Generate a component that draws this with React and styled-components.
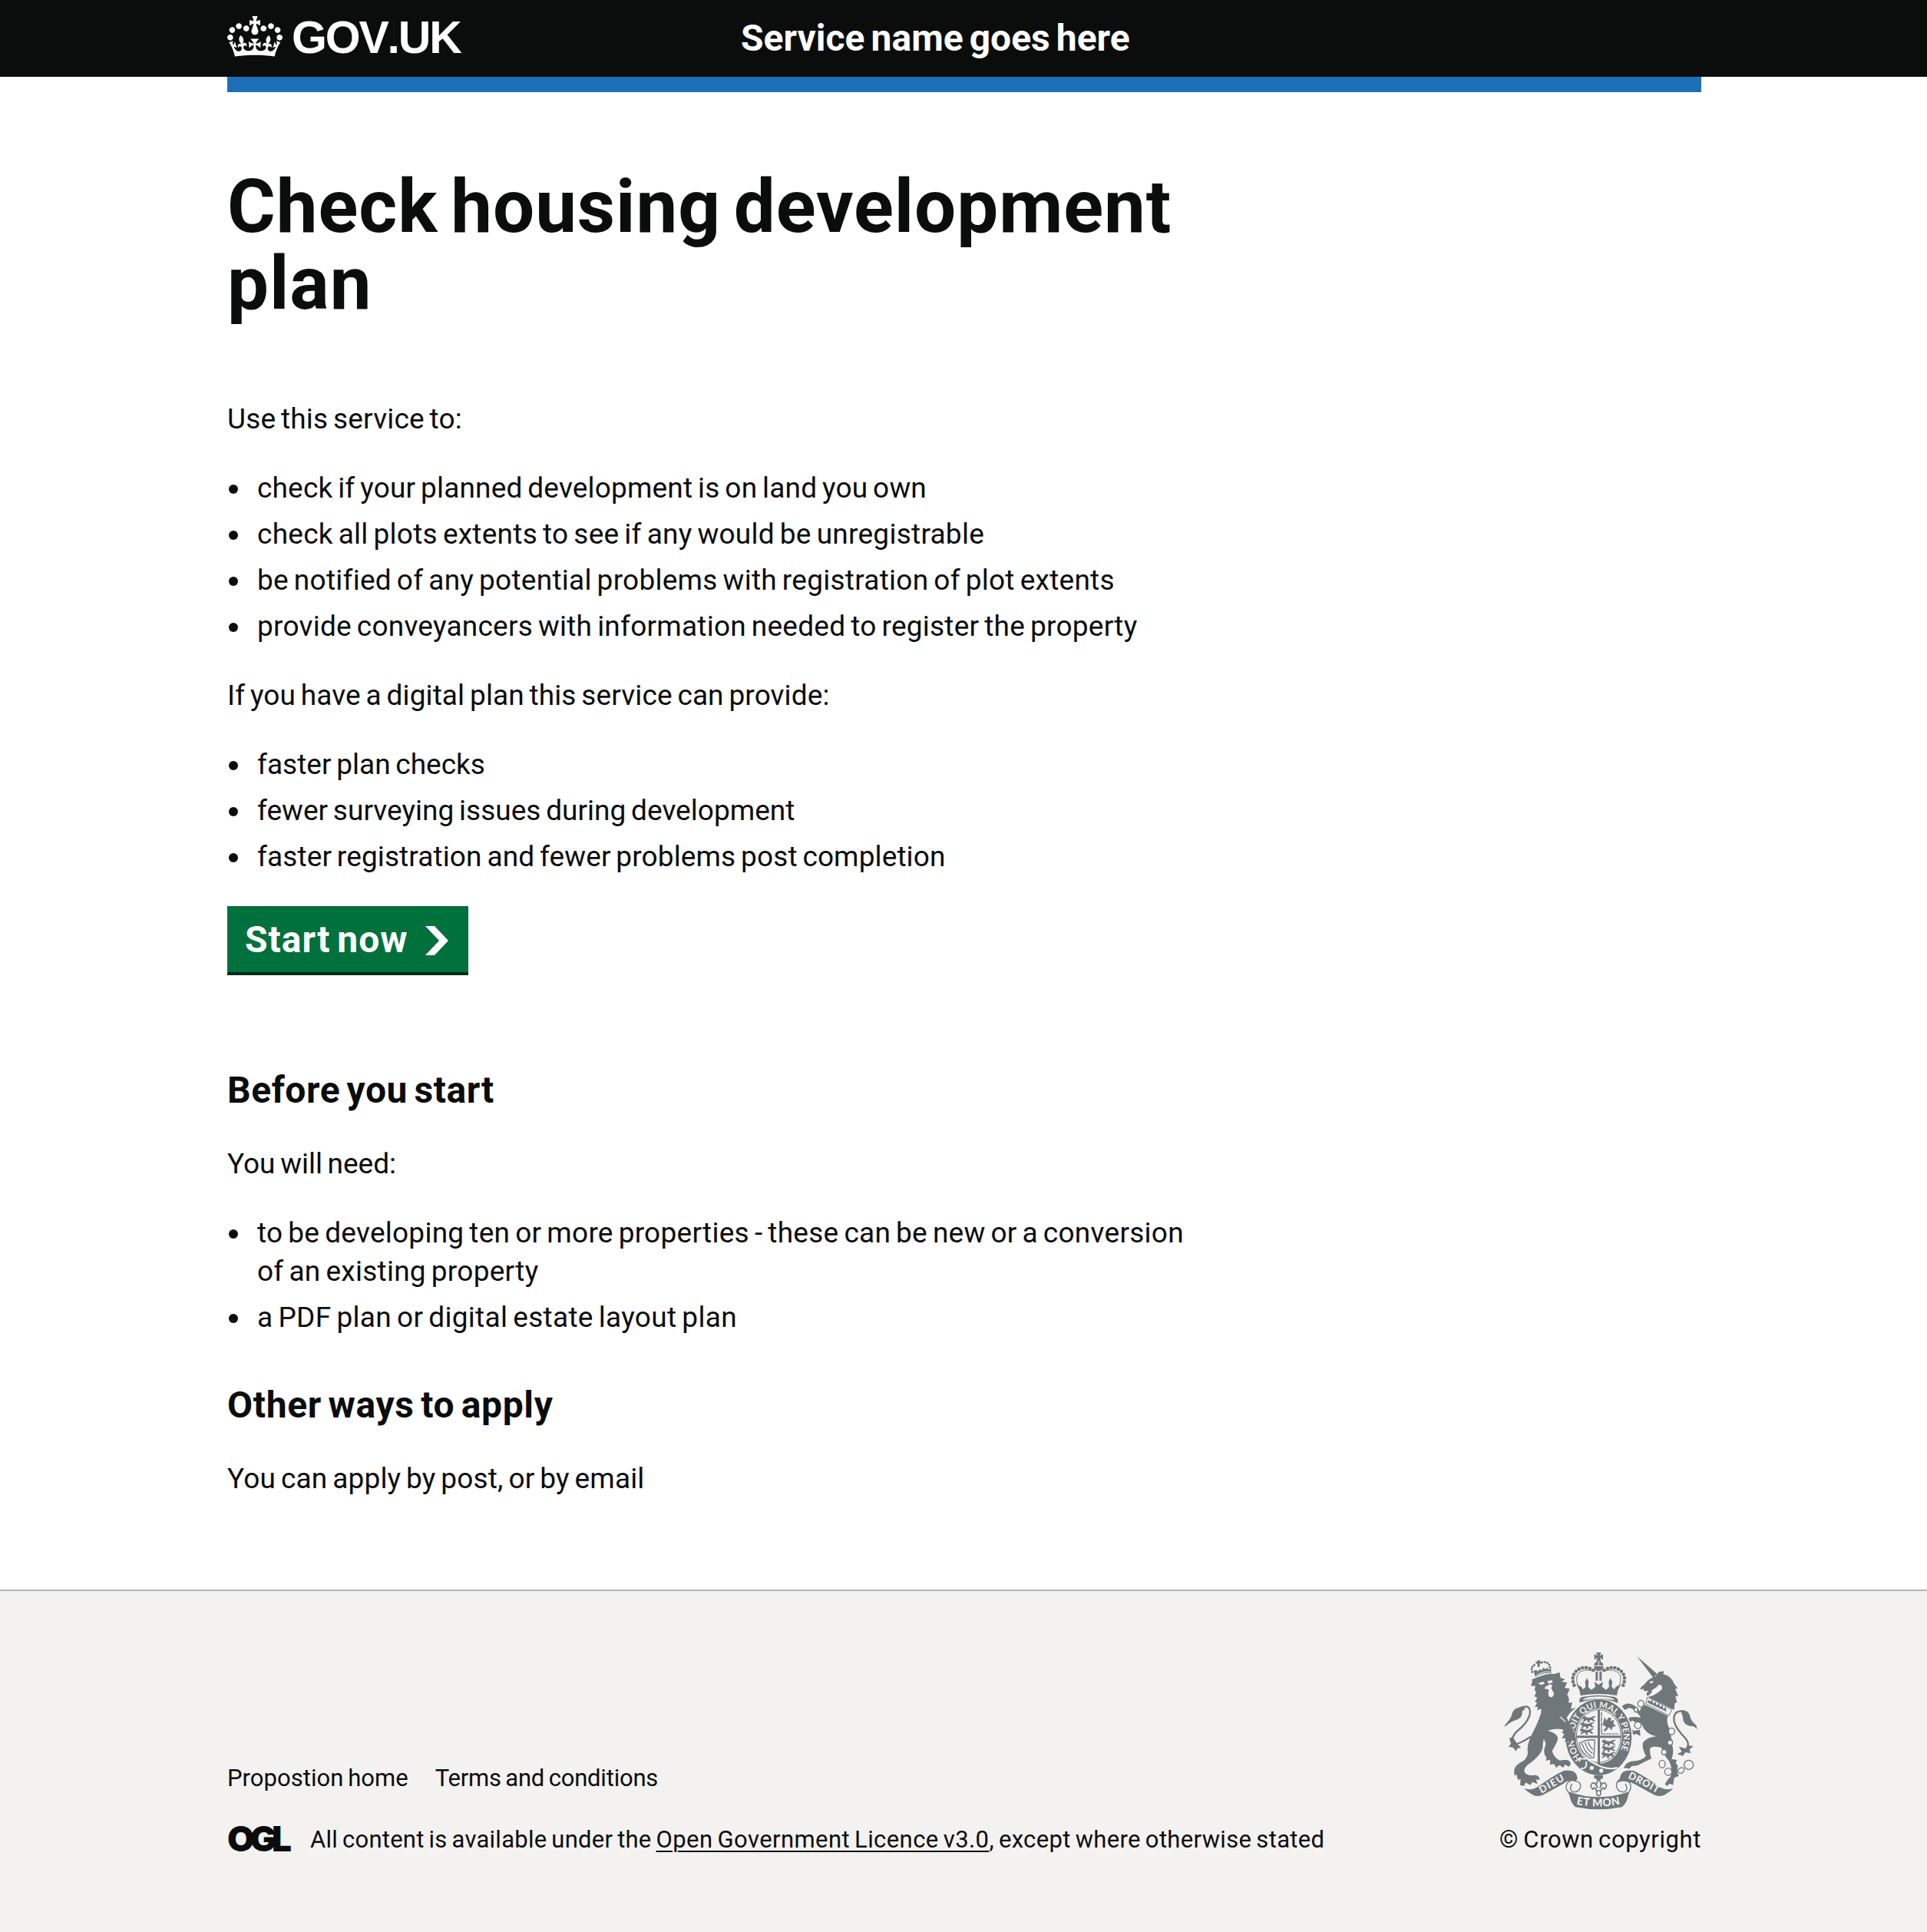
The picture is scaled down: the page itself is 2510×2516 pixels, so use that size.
import React from "react";
import styled, { createGlobalStyle } from "styled-components";

const ink = "#0b0c0c";
const crestGrey = "#6f777b";
const footerGrey = "#f3f2f1";

const GlobalStyle = createGlobalStyle`
  *, *::before, *::after { box-sizing: border-box; }
  body { margin: 0; background: #fff; color: ${ink}; font-family: Roboto, "Liberation Sans", sans-serif; }
`;

const Page = styled.div`
  min-height: 2516px;
  display: flex;
  flex-direction: column;
`;

const Container = styled.div`
  width: 1920px;
  margin: 0 294px 0 296px;
`;

const Header = styled.header`
  background: ${ink};
  color: #fff;
  height: 100px;
`;

const HeaderRow = styled.div`
  padding-left: 296px;
  height: 100px;
  display: flex;
  align-items: flex-start;
`;

const LogoLink = styled.a`
  width: 669px;
  display: flex;
  align-items: flex-start;
  color: #fff;
  text-decoration: none;
`;

const Crown = styled.svg`
  width: 72px;
  height: 53px;
  margin: 21px 12px 0 0;
  fill: currentColor;
`;

const LogoText = styled.span`
  font: 700 59px/60px "Liberation Sans", Arial, sans-serif;
  font-kerning: none;
  letter-spacing: -2.2px;
  margin-top: 19px;
`;

const ServiceName = styled.a`
  color: #fff;
  text-decoration: none;
  font-size: 48px;
  font-weight: 700;
  line-height: 60px;
  padding-top: 20px;
  letter-spacing: ${(p) => p.$track}px;
  word-spacing: -4px;
`;

const BlueBar = styled(Container)`
  height: 20px;
  background: #1d70b8;
`;

const Main = styled.main`
  width: 1920px;
  margin: 0 294px 0 296px;
  padding-top: 99px;
  height: 1950px;
`;

const Column = styled.div`
  width: 1252px;
`;

const Title = styled.h1`
  margin: 0 0 102px;
  font-size: 96px;
  line-height: 100px;
  font-weight: 700;
  letter-spacing: ${(p) => p.$track}px;
  word-spacing: -8px;
`;

const Paragraph = styled.p`
  margin: 0 0 40px;
  font-size: 37px;
  line-height: 50px;
  letter-spacing: ${(p) => p.$track}px;
  word-spacing: -2.5px;
`;

const List = styled.ul`
  margin: 0 0 40px;
  padding: 0;
  list-style: none;
  display: flex;
  flex-direction: column;
  gap: 10px;
`;

const Item = styled.li`
  display: flex;
  font-size: 37px;
  line-height: 50px;
  letter-spacing: ${(p) => p.$track}px;
  word-spacing: -2.5px;
  &::before {
    content: "";
    flex: none;
    width: 12px;
    height: 12px;
    border-radius: 50%;
    background: ${ink};
    margin: 20px 25px 0 2px;
  }
`;

const Heading = styled.h2`
  margin: 0 0 41px;
  padding-top: ${(p) => p.$space}px;
  font-size: 48px;
  line-height: 60px;
  font-weight: 700;
  letter-spacing: ${(p) => p.$track}px;
  word-spacing: -4px;
`;

const StartButton = styled.a`
  display: flex;
  width: 314px;
  height: 90px;
  margin-top: -41px;
  padding: 14px 26px 0 23px;
  justify-content: space-between;
  background: #00703c;
  border-bottom: 4px solid #002d18;
  color: #fff;
  text-decoration: none;
  font-size: 48px;
  line-height: 60px;
  font-weight: 700;
  letter-spacing: ${(p) => p.$track}px;
  word-spacing: -4px;
`;

const Benefits = styled(List)`
  margin-bottom: 80px;
`;

const Arrow = styled.svg`
  width: 30px;
  height: 38px;
  margin-top: 12px;
  fill: currentColor;
`;

const Footer = styled.footer`
  flex: 1;
  background: ${footerGrey};
  border-top: 2px solid #b1b4b6;
`;

const FooterRow = styled(Container)`
  height: 344px;
  display: flex;
  justify-content: space-between;
  align-items: flex-end;
`;

const FooterMeta = styled.div`
  display: flex;
  flex-direction: column;
  gap: 40px;
`;

const FooterLinks = styled.div`
  display: flex;
  gap: 35px;
`;

const FooterText = styled.a`
  color: ${ink};
  font-size: 31px;
  line-height: 40px;
  white-space: nowrap;
  text-decoration: none;
  letter-spacing: ${(p) => p.$track}px;
  word-spacing: -2px;
`;

const LicenceLine = styled.div`
  display: flex;
  height: 40px;
`;

const OglMark = styled.span`
  width: 108px;
  font: 900 46px/37px Inter, sans-serif;
  letter-spacing: -6.2px;
`;

const LicenceLink = styled(FooterText)`
  text-decoration: underline;
  text-decoration-thickness: 2px;
  text-underline-offset: 4px;
`;

const Copyright = styled.div`
  display: flex;
  flex-direction: column;
  align-items: flex-end;
  gap: 20px;
`;

const Crest = styled.svg`
  width: 250px;
  height: 204px;
  margin-right: 6px;
  overflow: visible;
`;

function CrownIcon() {
  return (
    <Crown viewBox="0 0 132 97" preserveAspectRatio="none" aria-hidden="true">
      <path d="M25 30.2c3.5 1.5 7.7-.2 9.1-3.7 1.5-3.6-.2-7.8-3.9-9.2-3.6-1.4-7.6.3-9.1 3.9-1.4 3.5.3 7.5 3.9 9zM9 39.5c3.6 1.5 7.8-.2 9.2-3.7 1.5-3.6-.2-7.8-3.9-9.1-3.6-1.5-7.6.2-9.1 3.8-1.4 3.5.3 7.5 3.8 9zM4.4 57.2c3.5 1.5 7.7-.2 9.1-3.8 1.5-3.6-.2-7.7-3.9-9.1-3.5-1.5-7.6.3-9.1 3.8-1.4 3.5.3 7.6 3.9 9.1zm38.3-21.4c3.5 1.5 7.7-.2 9.1-3.8 1.5-3.6-.2-7.7-3.9-9.1-3.6-1.5-7.6.3-9.1 3.8-1.3 3.6.4 7.7 3.9 9.1zm64.4-5.6c-3.6 1.5-7.8-.2-9.1-3.7-1.5-3.6.2-7.8 3.8-9.2 3.6-1.4 7.7.3 9.2 3.9 1.3 3.5-.4 7.5-3.9 9zm15.9 9.3c-3.6 1.5-7.7-.2-9.1-3.7-1.5-3.6.2-7.8 3.7-9.1 3.6-1.5 7.7.2 9.2 3.8 1.5 3.5-.3 7.5-3.8 9zm4.7 17.7c-3.6 1.5-7.8-.2-9.2-3.8-1.5-3.6.2-7.7 3.9-9.1 3.6-1.5 7.7.3 9.2 3.8 1.3 3.5-.4 7.6-3.9 9.1zM89.3 35.8c-3.6 1.5-7.8-.2-9.2-3.8-1.4-3.6.2-7.7 3.9-9.1 3.6-1.5 7.7.3 9.2 3.8 1.4 3.6-.3 7.7-3.9 9.1zM69.7 17.7l8.9 4.7V9.3l-8.9 2.8c-.2-.3-.5-.6-.9-.9L72.4 0H59.6l3.5 11.2c-.3.3-.6.5-.9.9l-8.8-2.8v13.1l8.8-4.7c.3.3.6.7.9.9l-5 15.4v.1c-.2.8-.4 1.6-.4 2.4 0 4.1 3.1 7.5 7 8.1h.2c.3 0 .7.1 1 .1.4 0 .7 0 1-.1h.2c4-.6 7.1-4.1 7.1-8.1 0-.8-.1-1.7-.4-2.4V34l-5.1-15.4c.4-.2.7-.6 1-.9zM66 92.8c16.9 0 32.8 1.1 47.1 3.2 4-16.9 8.9-26.7 14-33.5l-9.6-3.4c1 4.9 1.1 7.2 0 10.2-1.5-1.4-3-4.3-4.2-8.7L108.6 76c2.8-2 5-3.2 7.5-3.3-4.4 9.4-10 11.9-13.6 11.2-4.3-.8-6.3-4.6-5.6-7.9 1-4.7 5.7-5.9 8-.5 4.3-8.7-3-11.4-7.6-8.8 7.1-7.2 7.9-13.5 2.1-21.1-8 6.1-8.1 12.3-4.5 20.8-4.7-5.4-12.1-2.5-9.5 6.2 3.4-5.2 7.9-2 7.2 3.1-.6 4.3-6.4 7.8-13.5 7.2-10.3-.9-10.9-8-11.2-13.8 2.5-.5 7.1 1.8 11 7.3L80.2 60c-4.1 4.4-8 5.3-12.3 5.4 1.4-4.4 8-11.6 8-11.6H55.5s6.4 7.2 7.9 11.6c-4.2-.1-8-1-12.3-5.4l1.4 16.4c3.9-5.5 8.5-7.7 10.9-7.3-.3 5.8-.9 12.8-11.1 13.8-7.2.6-12.9-2.9-13.5-7.2-.7-5 3.8-8.3 7.1-3.1 2.7-8.7-4.6-11.6-9.4-6.2 3.7-8.5 3.6-14.7-4.6-20.8-5.8 7.6-5 13.9 2.2 21.1-4.7-2.6-11.9.1-7.7 8.8 2.3-5.5 7.1-4.2 8.1.5.7 3.3-1.3 7.1-5.7 7.9-3.5.7-9-1.8-13.5-11.2 2.5.1 4.7 1.3 7.5 3.3l-4.7-15.4c-1.2 4.4-2.7 7.2-4.3 8.7-1.1-3-.9-5.3 0-10.2l-9.5 3.4c5 6.9 9.9 16.7 14 33.5 14.8-2.1 30.8-3.2 47.7-3.2z" />
    </Crown>
  );
}

function SmallLion({ x, y }) {
  return (
    <path
      transform={`translate(${x} ${y})`}
      d="M4 3l8-3 5 5 16 2 12-5 10-2-2 5-8 3 4 8 8 4-12 1-4-5-10 1 2 7-10 1 2-6-8-2-6 6-9 1 7-8-2-5-6 1z"
      fill={crestGrey}
    />
  );
}

function RoyalCrest() {
  const bg = footerGrey;
  const line = { fill: "none", stroke: crestGrey, strokeLinecap: "round" };
  return (
    <Crest viewBox="60 66 750 612" fill={crestGrey} aria-hidden="true">
      {/* lion */}
      <path d="M168 178L162 196 181 197Q172 214 183 220L176 238 187 242 178 258 186 262 178 280 190 278 186 292 202 286Q205 300 195 322 185 350 165 388 145 430 150 455 150 480 128 492 104 504 97 522L97 546 106 544 112 564 122 560 120 584 135 588 142 574 160 584 168 572 188 580 182 562 196 564Q197 545 175 545 150 550 138 535 132 520 150 505 200 470 208 440 208 420 212 405 226 420 215 440 210 465 224 476L220 488 238 486 236 504 252 502 262 517 272 506 290 516 294 504 312 512 318 500Q316 486 298 485L275 488Q250 475 245 450 265 420 268 400 262 380 228 372 260 360 290 368L284 380 294 384 284 400 298 402 294 416 308 410 312 424 322 410 340 414Q336 385 318 350L302 322Q312 300 338 282L318 286 324 262 308 262Q316 246 304 232L314 208 294 204 304 184 282 180 296 170 278 165 274 143 255 150Q225 146 195 160L165 172Z" />
      <path d="M190 186l22-6 4 8-14 5zM226 178l18-4 4 8-16 6zM218 200l20-10 8 4-4 12 10 18q0 16-12 17-10-2-10-17l2-14-16-2z" fill={bg} />
      <path d="M276 318Q310 345 328 372" fill="none" stroke={bg} strokeWidth="4" />
      <path {...line} strokeWidth="7" d="M120 282Q166 264 157 312 145 345 110 372 85 392 92 422 100 434 160 396" />
      <path d="M142 284Q100 272 88 305 88 320 60 350L62 356Q82 336 104 330 132 320 128 296zM90 395L78 402 84 422 75 434 94 438 104 452 110 440 124 438 110 424z" />
      <path d="M172 138L180 161Q208 143 241 147L241 126Q230 140 226 124 218 138 212 124 204 142 196 130 190 146 184 134Z" />
      <path d="M188 96h10l-1 6 6-1v9l-6-1-1 14h-7l-2-14-6 1v-9l7 1z" />
      <path {...line} strokeWidth="9" strokeDasharray="0 10.5" d="M167 142Q160 118 182 112M206 104Q234 98 238 130" />
      <path d="M184 155Q208 138 238 142" fill="none" stroke={bg} strokeWidth="3" />

      {/* unicorn */}
      <path d="M576 80L656 150 640 164ZM650 158L662 142 684 139 678 150Q712 158 722 188L736 206 726 208 738 236 727 236 733 262 724 264 722 290 620 240Q648 234 674 210 678 190 662 192 652 206 636 212 634 230 616 236L614 224 622 216 604 217 602 208 590 212Q590 198 605 192 618 170 650 158Z" />
      <path d="M624 182l12-5 6 4-10 6z" fill={bg} />
      <path d="M618 240L713 289 702 313 611 266Z" fill={bg} stroke={crestGrey} strokeWidth="3" />
      <path d="M618 262l4-12 6 8 8-8 4 16 8-8 6 15 9-10 4 17 9-9 4 16 9-9 3 19z" />
      <path d="M608 270L698 314Q690 335 700 355 713 400 715 430 722 455 712 482L733 486 728 498 736 508 734 536 740 548 722 556 718 584 704 578 694 588 686 580Q697 560 708 552 717 520 702 490 680 465 672 438 640 428 628 440 625 462 634 480 600 496 578 508L556 510 548 520 524 517Q535 490 570 490 600 486 612 470 595 440 600 418 618 396 652 394 608 385 595 345 578 345 560 332 548 335 550 350L562 372 588 368 590 392 574 384 562 388Q538 360 534 330 545 316 570 318L592 320Q580 300 560 287L548 282 528 290 518 276Q535 260 555 268 575 275 588 296 590 280 608 270Z" />
      <path {...line} strokeWidth="7" d="M760 296Q716 290 722 335 728 362 765 400 786 426 770 442" />
      <path d="M748 292Q776 288 783 312 788 335 808 350L812 366Q798 350 784 354 756 346 756 320zM740 434L752 454 734 462 756 470 766 456 786 460 782 444 798 432 780 430 770 442z" />
      <g fill={bg} stroke={crestGrey} strokeWidth="4">
        <ellipse cx="592" cy="266" rx="12" ry="13" />
        <ellipse cx="573" cy="290" rx="7" ry="9" />
        <circle cx="580" cy="350" r="13" />
        <ellipse cx="712" cy="374" rx="12" ry="13" />
        <circle cx="706" cy="418" r="10" />
        <circle cx="683" cy="455" r="10" />
        <ellipse cx="675" cy="502" rx="12" ry="15" />
        <circle cx="699" cy="532" r="14" />
        <ellipse cx="749" cy="527" rx="13" ry="10" transform="rotate(-35 749 527)" />
        <circle cx="779" cy="505" r="18" />
      </g>

      {/* garter and shield */}
      <ellipse cx="427" cy="397" rx="134" ry="152" fill={bg} />
      <ellipse cx="427" cy="397" rx="129" ry="148" />
      <ellipse cx="427" cy="393" rx="91" ry="108" fill={bg} />
      <ellipse cx="427" cy="393" rx="87" ry="103" fill="none" stroke={crestGrey} strokeWidth="3" />
      <path d="M423 290h9v212h-9zM340 391h174v9H340z" />
      <path d="M438 300V384H504" fill="none" stroke={crestGrey} strokeWidth="5" strokeDasharray="5 2" />
      <path d="M450 318l8 14 7-12 12 2-4 12 14-4-2 14 10 10-13 2-4 14-11-12-9 12-12 6 4-12 8-4-10-10-6 2z" />
      <SmallLion x={360} y={314} />
      <SmallLion x={354} y={338} />
      <SmallLion x={352} y={362} />
      <SmallLion x={438} y={406} />
      <SmallLion x={438} y={430} />
      <SmallLion x={436} y={454} />
      <path {...line} strokeWidth="4" d="M352 420Q382 404 412 408L408 476Q392 484 380 470 352 446 352 420M362 422Q372 456 398 472M374 418Q382 446 402 460M386 416Q392 434 404 444" />
      <path id="garter" d="M360 480A97 115 0 1 1 492 482" fill="none" />
      <text fill={bg} fontFamily="Lato" fontWeight="700" fontSize="34">
        <textPath href="#garter" textLength="474">HONI SOIT QUI MAL Y PENSE</textPath>
      </text>
      <path d="M290 368L284 380 294 384 284 400 298 402 294 416 308 410 312 424 322 410 340 414Q336 385 318 350L302 322Z" />
      <path d="M352 492Q350 476 372 482 384 470 394 490 456 530 500 516" fill="none" stroke={bg} strokeWidth="6" />
      <path d="M358 520Q384 520 378 492" fill="none" stroke={bg} strokeWidth="6" />
      <circle cx="400" cy="517" r="8" fill={bg} />
      <circle cx="437" cy="528" r="8" fill={bg} />

      {/* crown */}
      <path d="M417 66h20l-6 13 13-7v22l-13-7 6 13h-20l6-13-13 7v-22l13 7z" />
      <circle cx="427" cy="119" r="19" />
      <path d="M408 118h38M427 100v18" stroke={bg} strokeWidth="3" />
      <path {...line} strokeWidth="14" strokeDasharray="0 14.6" d="M406 135Q366 112 336 142 318 164 332 196M448 135Q488 112 518 142 536 164 522 196" />
      <path {...line} strokeWidth="3" d="M410 140Q366 124 344 152 336 176 350 206M444 140Q488 124 510 152 518 176 504 206" />
      <path d="M415 140h9v36h-9zM430 140h9v36h-9z" />
      <path d="M340 190L352 214 356 234Q427 222 498 234L502 214 514 190 494 200 488 210 478 200 480 180 473 166 466 180 468 200 456 212 440 200 444 180 427 192 410 180 414 200 398 212 386 200 388 180 381 166 374 180 376 200 366 210 360 200Z" />
      <path d="M352 262V248Q358 238 380 238 427 228 474 238 496 238 502 250V264L488 258Q427 236 366 258Z" />
      <path d="M366 252Q366 240 427 238 488 240 488 252 427 240 366 252Z" fill={bg} />

      {/* motto ribbon */}
      <path d="M136 598Q172 606 192 588 255 545 290 528 342 520 344 560L334 570Q308 562 290 578 240 606 206 624 184 632 166 620 150 612 136 598ZM718 598Q682 606 662 588 599 545 564 528 512 520 510 560L494 580Q512 560 564 578 614 606 648 624 670 632 688 620 704 612 718 598Z" />
      <path d="M310 610Q427 652 545 610 540 654 518 670 427 688 336 670 316 654 310 610Z" />
      <path {...line} strokeWidth="4" d="M334 568Q360 570 355 594 348 614 326 610 310 604 322 580M322 566Q298 572 300 598L312 618M510 560Q492 574 498 594 506 614 528 610 544 604 532 580M532 566Q556 572 552 598L542 618" />
      <path id="ribbonLeft" d="M203 617Q252 590 298 562" fill="none" />
      <path id="ribbonRight" d="M540 556Q600 585 660 619" fill="none" />
      <path id="ribbonMid" d="M340 659Q427 676 514 659" fill="none" />
      <g fill={bg} fontFamily="Lato" fontWeight="900" fontSize="39">
        <text><textPath href="#ribbonLeft" textLength="106">DIEU</textPath></text>
        <text><textPath href="#ribbonRight" textLength="130">DROIT</textPath></text>
        <text fontSize="42"><textPath href="#ribbonMid" textLength="172">ET MON</textPath></text>
      </g>
      <path d="M409 546h35v10l-12 8h-10l-13-8z" />
      <path d="M427 562Q442 580 432 596 436 574 452 576 464 588 450 600L444 594Q436 600 436 606H418Q418 600 410 594L404 600Q390 588 402 576 418 574 422 596 412 580 427 562ZM420 606L434 606Q438 624 427 626 416 624 420 606Z" fill="none" stroke={crestGrey} strokeWidth="5" />
    </Crest>
  );
}

export default function App() {
  return (
    <>
      <GlobalStyle />
      <Page>
        <Header>
          <HeaderRow>
            <LogoLink href="#">
              <CrownIcon />
              <LogoText>GOV.UK</LogoText>
            </LogoLink>
            <ServiceName href="#" $track={0.02}>Service name goes here</ServiceName>
          </HeaderRow>
        </Header>
        <BlueBar />
        <Main>
          <Column>
            <Title $track={0.95}>Check housing development plan</Title>
            <Paragraph $track={0.16}>Use this service to:</Paragraph>
            <List>
              <Item $track={0.17}>check if your planned development is on land you own</Item>
              <Item $track={0.26}>check all plots extents to see if any would be unregistrable</Item>
              <Item $track={0.26}>be notified of any potential problems with registration of plot extents</Item>
              <Item $track={0.24}>provide conveyancers with information needed to register the property</Item>
            </List>
            <Paragraph $track={0.11}>If you have a digital plan this service can provide:</Paragraph>
            <Benefits>
              <Item $track={0.02}>faster plan checks</Item>
              <Item $track={0.03}>fewer surveying issues during development</Item>
              <Item $track={0.116}>faster registration and fewer problems post completion</Item>
            </Benefits>
            <StartButton href="#" $track={0.98}>
              <span>Start now</span>
              <Arrow viewBox="0 0 30 38" aria-hidden="true">
                <path d="M0 0h12l18 19-18 19H0l18-19z" />
              </Arrow>
            </StartButton>
            <Heading $space={120} $track={0.54}>Before you start</Heading>
            <Paragraph $track={-0.015}>You will need:</Paragraph>
            <List>
              <Item $track={0.26}>to be developing ten or more properties - these can be new or a conversion of an existing property</Item>
              <Item $track={0.31}>a PDF plan or digital estate layout plan</Item>
            </List>
            <Heading $space={19} $track={0.65}>Other ways to apply</Heading>
            <Paragraph $track={0.17}>You can apply by post, or by email</Paragraph>
          </Column>
        </Main>
        <Footer>
          <FooterRow>
            <FooterMeta>
              <FooterLinks>
                <FooterText href="#" $track={0.04}>Propostion home</FooterText>
                <FooterText href="#" $track={-0.2}>Terms and conditions</FooterText>
              </FooterLinks>
              <LicenceLine>
                <OglMark>OGL</OglMark>
                <FooterText as="span" $track={0.25}>All content is available under the&nbsp;</FooterText>
                <LicenceLink href="#" $track={0.41}>Open Government Licence v3.0</LicenceLink>
                <FooterText as="span" $track={0.34}>, except where otherwise stated</FooterText>
              </LicenceLine>
            </FooterMeta>
            <Copyright>
              <RoyalCrest />
              <FooterText href="#" $track={0.6}>© Crown copyright</FooterText>
            </Copyright>
          </FooterRow>
        </Footer>
      </Page>
    </>
  );
}
